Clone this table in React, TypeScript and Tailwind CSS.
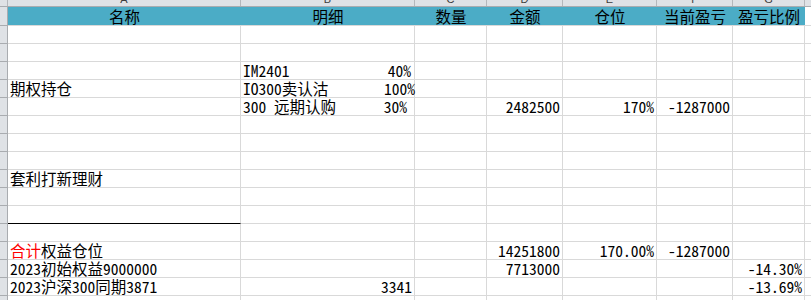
import React from "react";

// 表格列：行号列 + A..G + 右侧残列
const cols = ["A", "B", "C", "D", "E", "F", "G"];
const headers = ["名称", "明细", "数量", "金额", "仓位", "当前盈亏", "盈亏比例"];

type Cell = React.ReactNode;
type Row = { cells: Cell[]; blackA?: boolean };

const R = ({ children }: { children: React.ReactNode }) => (
  <div className="w-full text-right pr-[2px]">{children}</div>
);

const L = ({ children }: { children: React.ReactNode }) => (
  <div className="w-full pl-[2px] whitespace-nowrap">{children}</div>
);

// 明细列：左边名称，右边比例
const Detail = ({ name, pct, pr }: { name: string; pct: string; pr: string }) => (
  <div className="w-full flex justify-between pl-[2px] whitespace-pre">
    <span>{name}</span>
    <span className={pr}>{pct}</span>
  </div>
);

const rows: Row[] = [
  { cells: [] },
  { cells: [] },
  { cells: [null, <Detail name="IM2401" pct="40%" pr="mr-[3px]" />] },
  { cells: [<L>期权持仓</L>, <Detail name="IO300卖认沽" pct="100%" pr="mr-[-1px]" />] },
  {
    cells: [
      null,
      <Detail name="300 远期认购" pct="30%" pr="mr-[7px]" />,
      null,
      <R>2482500</R>,
      <R>170%</R>,
      <R>-1287000</R>,
    ],
  },
  { cells: [] },
  { cells: [] },
  { cells: [] },
  { cells: [<L>套利打新理财</L>] },
  { cells: [] },
  { cells: [], blackA: true },
  { cells: [] },
  {
    cells: [
      <L>
        <span className="text-[#ff0000]">合计</span>权益仓位
      </L>,
      null,
      null,
      <R>14251800</R>,
      <R>170.00%</R>,
      <R>-1287000</R>,
    ],
  },
  { cells: [<L>2023初始权益9000000</L>, null, null, <R>7713000</R>, null, null, <R>-14.30%</R>] },
  { cells: [<L>2023沪深300同期3871</L>, <R>3341</R>, null, null, null, null, <R>-13.69%</R>] },
  { cells: [] },
];

const grid =
  "grid grid-cols-[8px_233px_174px_72px_76px_94px_76px_72px_1fr]";

export default function App() {
  return (
    <div className="w-[811px] h-[300px] overflow-hidden bg-white text-black font-['Noto_Sans_Mono_CJK_SC','Liberation_Mono','Noto_Sans_CJK_SC',monospace] text-[15.5px]">
      {/* 列标 */}
      <div className={`${grid} h-[7px] bg-[#dfe2e6] border-b border-[#a9acb0]`}>
        <div className="border-r border-[#b5b8bc]" />
        {cols.map((c) => (
          <div
            key={c}
            className="border-r border-[#b5b8bc] overflow-hidden flex justify-center"
          >
            <span className="text-[11px] leading-[11px] -mt-[6px] text-[#3c3c3c] font-['Liberation_Sans',sans-serif]">
              {c}
            </span>
          </div>
        ))}
        <div />
      </div>

      {/* 标题行 */}
      <div className={`${grid} h-[19px]`}>
        <div className="bg-[#dfe2e6] border-r border-b border-[#a9acb0]" />
        <div className="col-span-7 grid grid-cols-[233px_174px_72px_76px_94px_76px_72px] bg-[#4bacc6] border-b border-[#d9d9d9]">
          {headers.map((h) => (
            <div key={h} className="flex items-end justify-center leading-[18px]">
              {h}
            </div>
          ))}
        </div>
        <div className="border-b border-[#d9d9d9]" />
      </div>

      {rows.map((row, i) => (
        <div key={i} className={`${grid} h-[18px]`}>
          <div className="bg-[#dfe2e6] border-r border-b border-[#a9acb0]" />
          {cols.map((c, j) => (
            <div
              key={c}
              className={
                j === 0 && row.blackA
                  ? "flex items-end leading-[17px] border-r border-b border-r-[#d9d9d9] border-b-black"
                  : "flex items-end leading-[17px] border-r border-b border-[#d9d9d9]"
              }
            >
              {row.cells[j] ?? null}
            </div>
          ))}
          <div className="border-b border-[#d9d9d9]" />
        </div>
      ))}
    </div>
  );
}
